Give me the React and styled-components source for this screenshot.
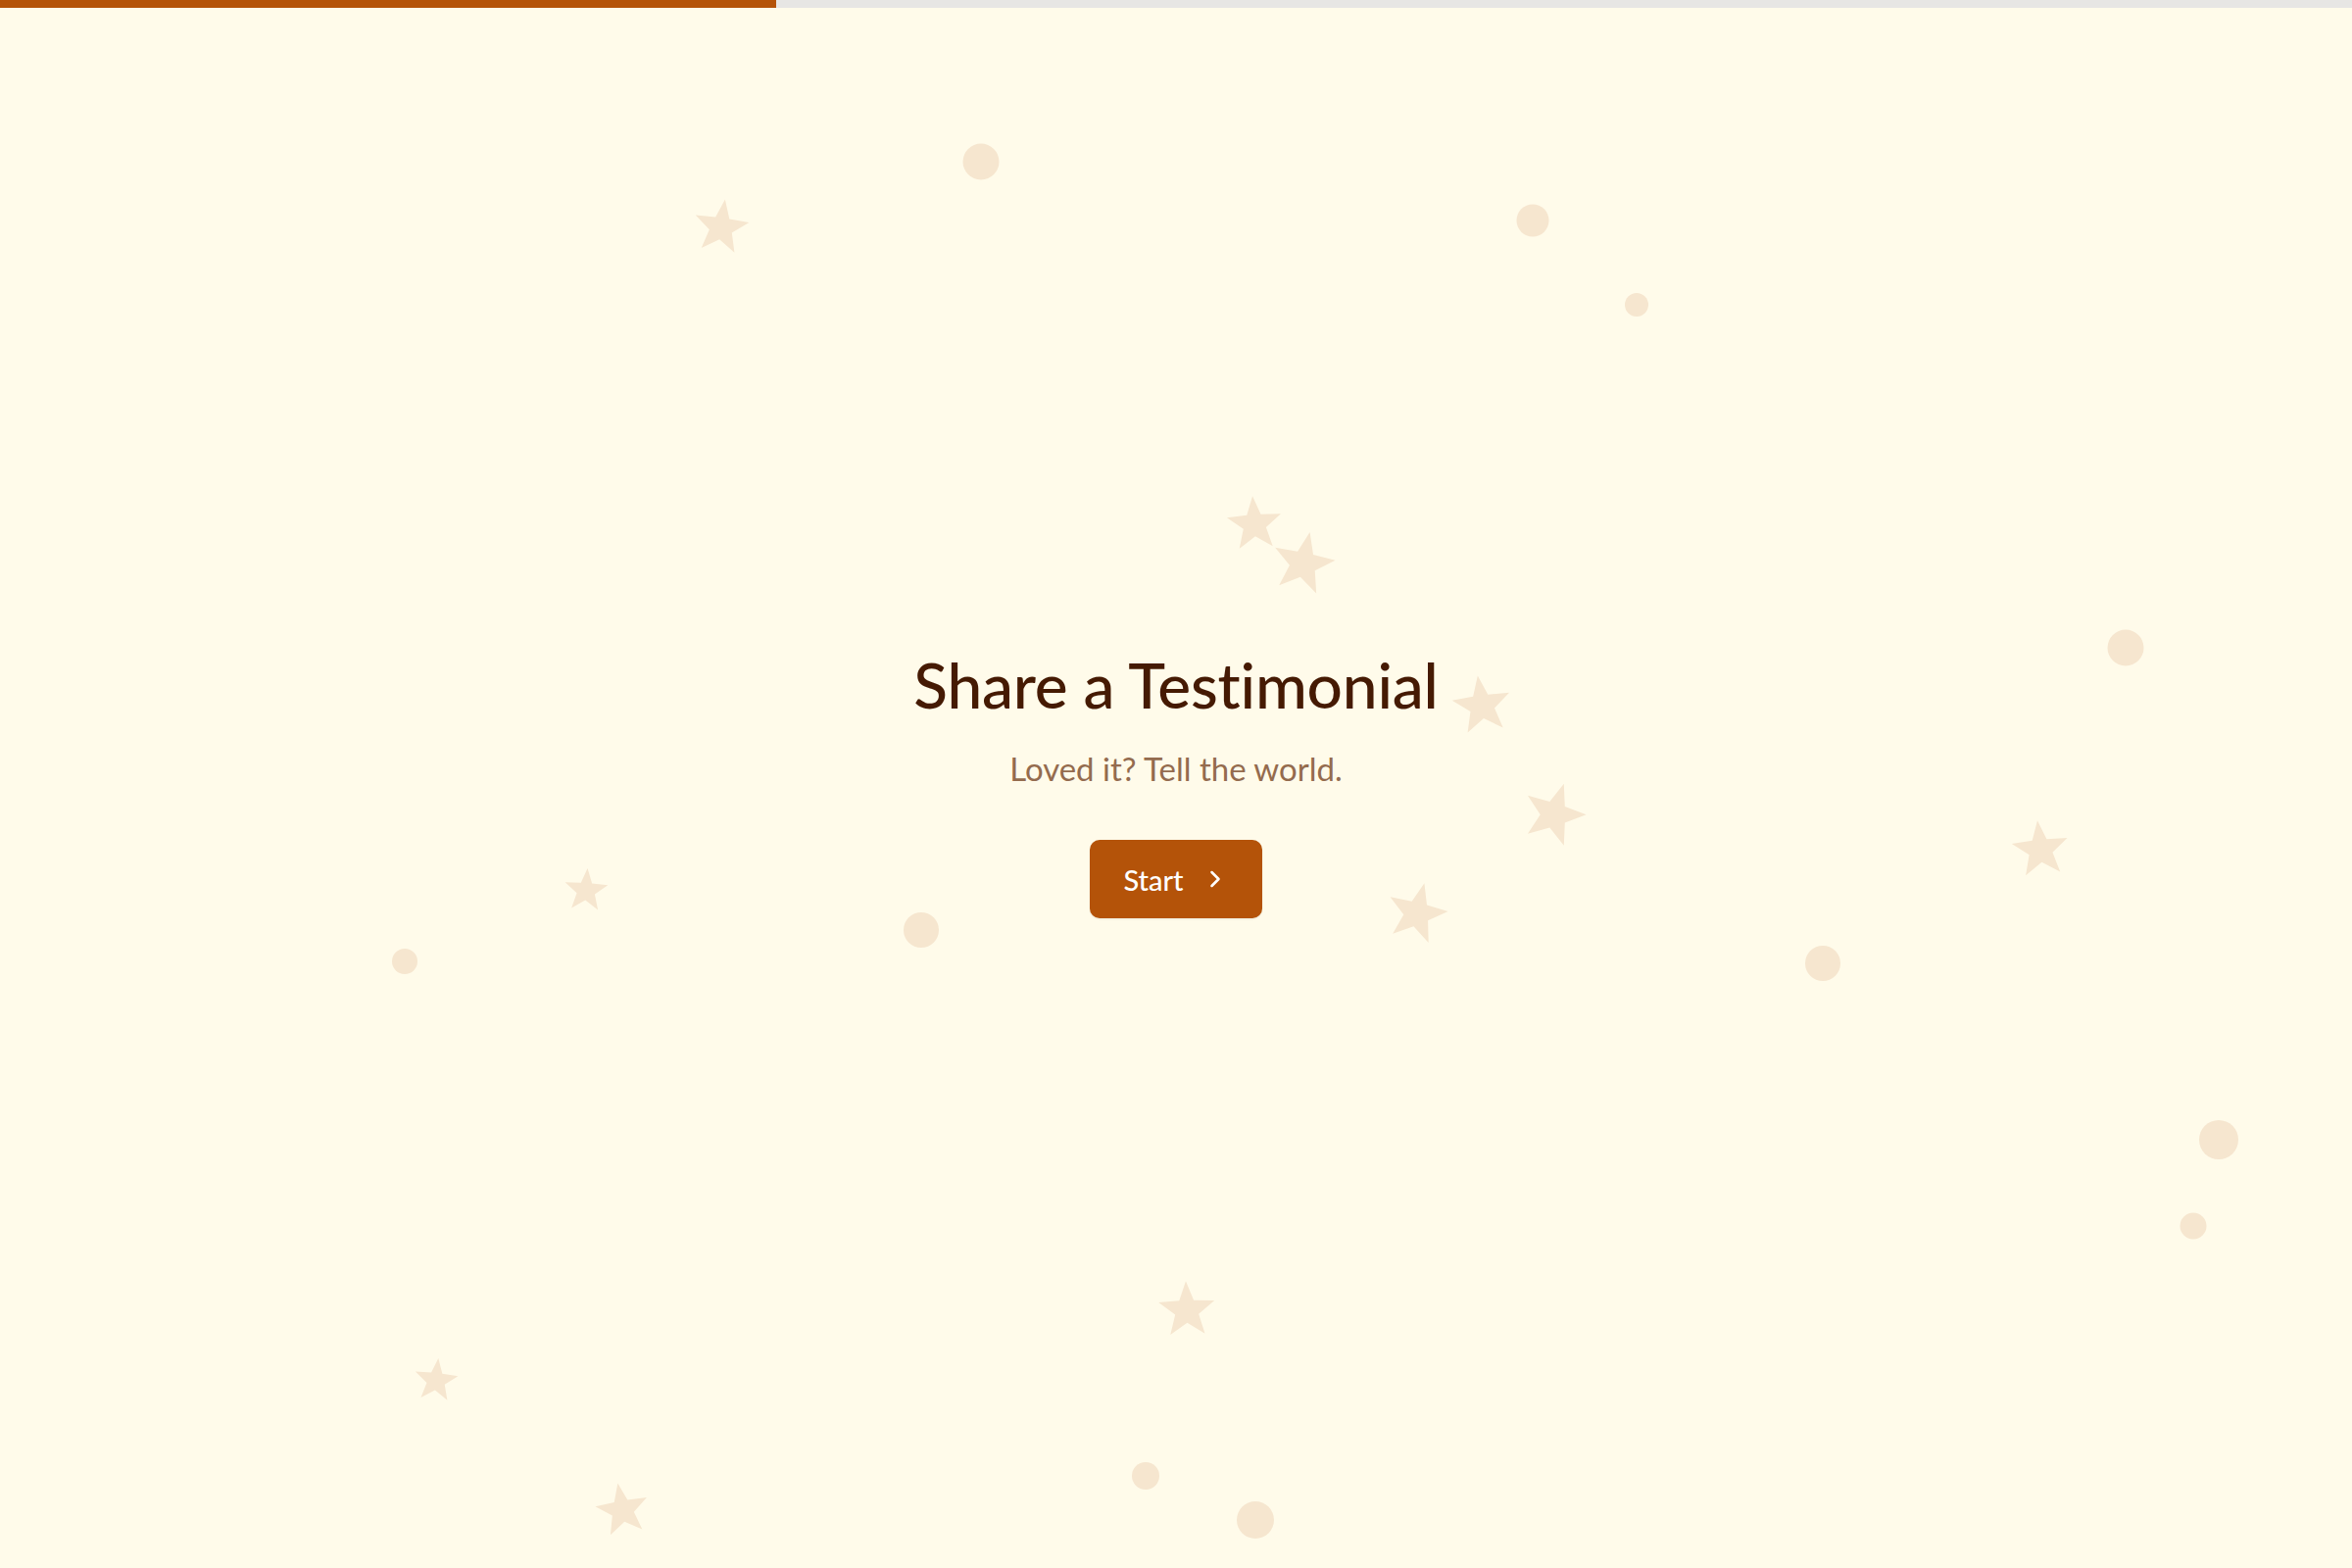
import { createGlobalStyle } from 'styled-components'
import styled from 'styled-components'
import { ChevronRight } from 'lucide-react'

const GlobalStyle = createGlobalStyle`
  html, body {
    margin: 0;
    padding: 0;
    background: #fffbea;
  }
  body {
    font-family: Lato, "Noto Sans", sans-serif;
  }
`

const Page = styled.div`
  position: relative;
  width: 100%;
  height: 1600px;
  overflow: hidden;
  background: #fffbea;
  display: flex;
  flex-direction: column;
`

const Progress = styled.div`
  height: 8px;
  background: #e7e6e4;
  flex-shrink: 0;
  .fill{
    height: 100%;
    background: #b45309;
  }
`

const Stage = styled.main`
  flex: 1;
  display: flex;
  flex-direction: column;
  align-items: center;
  justify-content: center;
  position: relative;
  z-index: 1;
  padding-bottom: 10px;
`

const Title = styled.h1`
  margin: 0;
  font-size: 64px;
  font-weight: 500;
  color: #451a03;
  letter-spacing: -0.2px;
  line-height: 1.2;
`

const Subtitle = styled.p`
  margin: 27px 0 0;
  font-size: 33px;
  font-weight: 400;
  color: #946b4e;
`

const StartButton = styled.button`
  margin-top: 53px;
  width: 176px;
  height: 80px;
  display: flex;
  align-items: center;
  justify-content: center;
  gap: 18px;
  background: #b45309;
  color: #fff;
  border: none;
  border-radius: 10px;
  font-family: inherit;
  font-size: 29px;
  font-weight: 500;
  cursor: pointer;
  box-shadow: 0 1px 2px rgba(0,0,0,0.08);
`

const Decor = styled.div`
  position: absolute;
  inset: 0;
  pointer-events: none;
`

const Dot = styled.span`
  position: absolute;
  border-radius: 50%;
  background: #f6e6cf;
  transform: translate(-50%, -50%);
`

const StarMark = styled.svg`
  position: absolute;
  transform: translate(-50%, -50%) rotate(${p => p.$rot}deg);
  fill: #f6e6cf;
`

const dots = [
  [1001, 165, 37], [1564, 225, 33], [1670, 311, 24], [2169, 661, 37],
  [940, 949, 36], [413, 981, 26], [1860, 983, 36], [2264, 1163, 40],
  [2238, 1251, 27], [1169, 1506, 28], [1281, 1551, 38]
]

const stars = [
  [736, 231, 58, 8], [1280, 534, 58, -4], [1330, 574, 66, 12],
  [1512, 719, 62, -8], [1586, 830, 66, 18], [2082, 866, 60, -6],
  [598, 908, 46, 4], [1446, 931, 64, 14], [1211, 1336, 60, -2],
  [445, 1408, 46, 6], [635, 1540, 56, -10]
]

const starPoints = (() => {
  const pts = []
  for (let i = 0; i < 10; i++) {
    const r = i % 2 === 0 ? 50 : 21
    const a = -Math.PI / 2 + (i * Math.PI) / 5
    pts.push(`${(50 + r * Math.cos(a)).toFixed(2)},${(52 + r * Math.sin(a)).toFixed(2)}`)
  }
  return pts.join(' ')
})()

export default function App() {
  return (
    <>
      <GlobalStyle />
      <Page>
        <Progress>
          <div className="fill" style={{ width: '33%' }} />
        </Progress>
        <Decor>
          {dots.map(([x, y, d], i) => (
            <Dot key={'d' + i} style={{ left: x, top: y, width: d, height: d }} />
          ))}
          {stars.map(([x, y, s, r], i) => (
            <StarMark key={'s' + i} $rot={r} viewBox="0 0 100 100" width={s} height={s} style={{ left: x, top: y }}>
              <polygon points={starPoints} />
            </StarMark>
          ))}
        </Decor>
        <Stage>
          <Title>Share a Testimonial</Title>
          <Subtitle>Loved it? Tell the world.</Subtitle>
          <StartButton>
            Start
            <ChevronRight size={28} strokeWidth={2.2} />
          </StartButton>
        </Stage>
      </Page>
    </>
  )
}
